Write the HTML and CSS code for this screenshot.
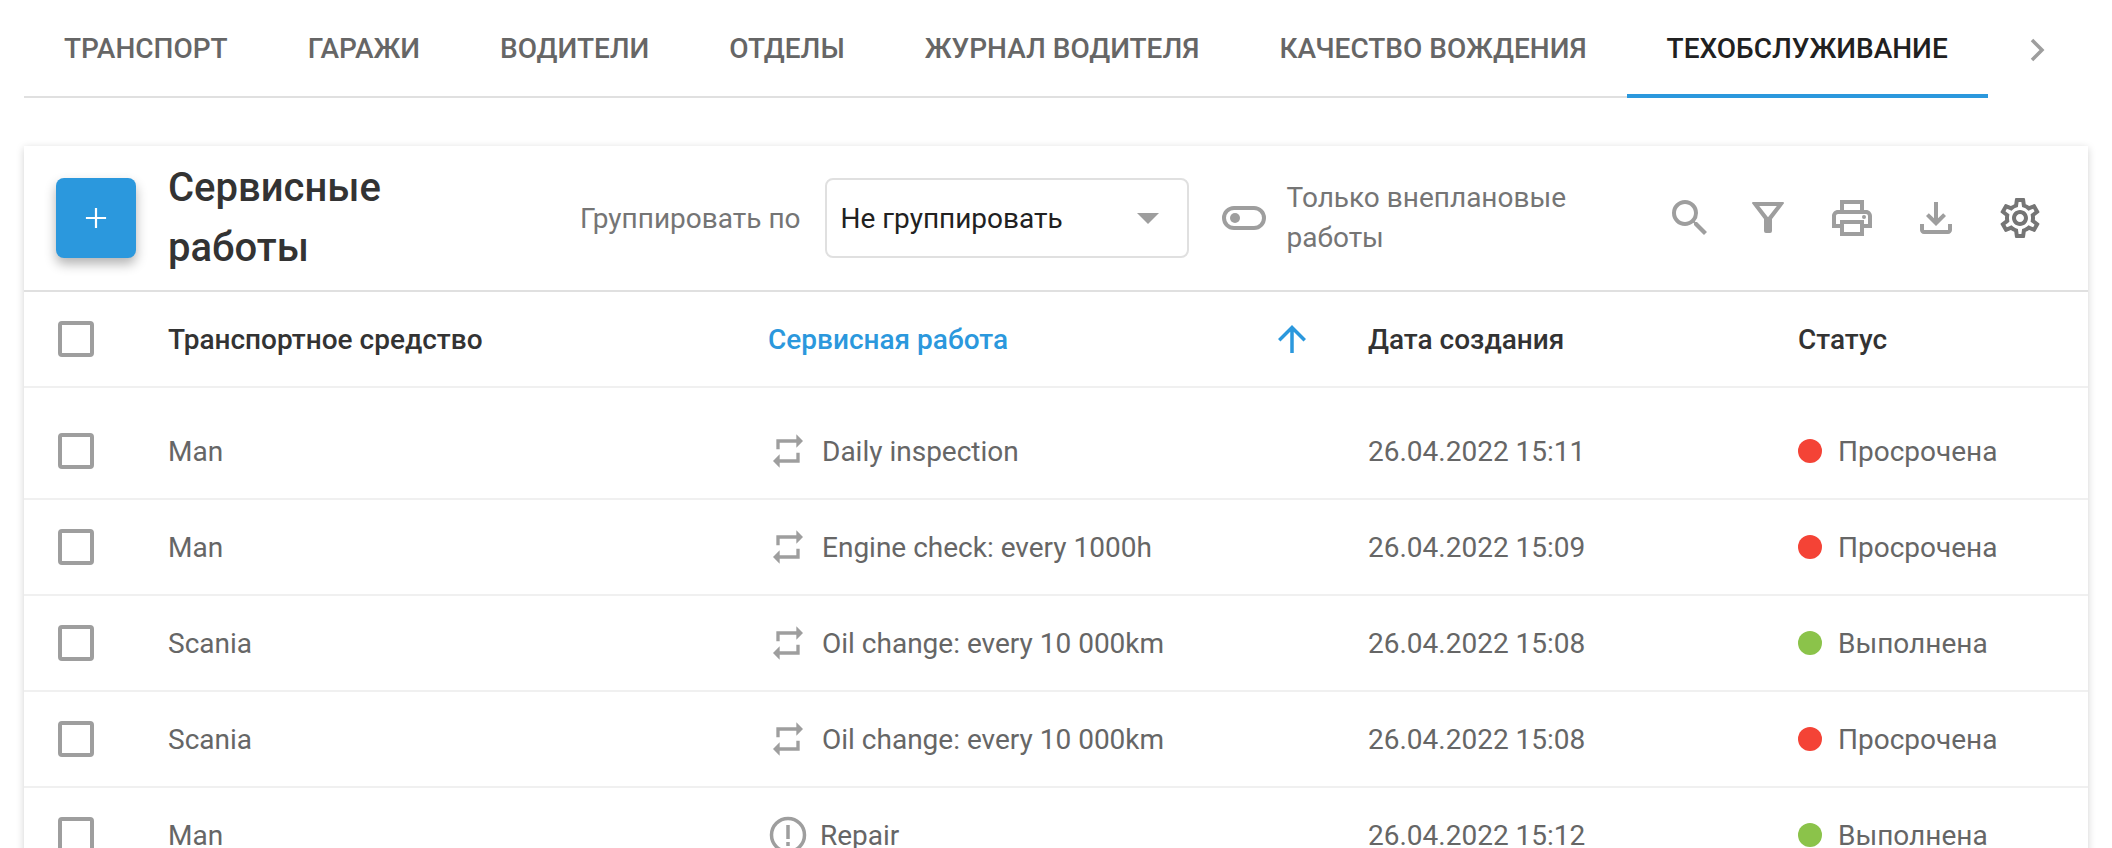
FILE: index.html
```html
<!DOCTYPE html>
<html lang="ru">
<head>
  <meta charset="UTF-8" />
  <title>Сервисные работы</title>
  <link rel="stylesheet" href="styles.css">
</head>
<body>
  <nav class="tabs-bar">
    <div class="tabs">
      <a class="tab">Транспорт</a>
      <a class="tab">Гаражи</a>
      <a class="tab">Водители</a>
      <a class="tab">Отделы</a>
      <a class="tab">Журнал водителя</a>
      <a class="tab">Качество вождения</a>
      <a class="tab tab-active">Техобслуживание</a>
    </div>
    <svg class="tabs-next" viewBox="0 0 16 24"><path d="M3 2l10 10L3 22" /></svg>
  </nav>

  <section class="card">
    <div class="toolbar">
      <button class="fab">
        <svg viewBox="0 0 24 24"><path d="M12 1v22M1 12h22" /></svg>
      </button>
      <h1 class="title">Сервисные работы</h1>
      <span class="group-label">Группировать по</span>
      <div class="select">
        <span>Не группировать</span>
        <i class="select-arrow"></i>
      </div>
      <div class="toggle"><i class="toggle-knob"></i></div>
      <span class="toggle-label">Только внеплановые работы</span>
      <div class="actions">
        <span class="action action-search">
          <svg class="icon" viewBox="0 0 24 24"><path d="M15.5 14h-.79l-.28-.27A6.471 6.471 0 0 0 16 9.5 6.5 6.5 0 1 0 9.5 16c1.61 0 3.09-.59 4.23-1.57l.27.28v.79l5 4.99L20.49 19l-4.99-5zm-6 0C7.01 14 5 11.99 5 9.5S7.01 5 9.5 5 14 7.01 14 9.5 11.99 14 9.5 14z"/></svg>
        </span>
        <span class="action">
          <svg class="icon" viewBox="0 0 24 24"><path fill-rule="evenodd" d="M4.5 4h15a.5.5 0 0 1 .4.8L14 12.5v6a1 1 0 0 1-1 1h-2a1 1 0 0 1-1-1v-6L4.1 4.8A.5.5 0 0 1 4.5 4zM7.6 6L12 11.6 16.4 6z"/></svg>
        </span>
        <span class="action">
          <svg class="icon" viewBox="0 0 24 24"><path d="M19 8h-1V3H6v5H5c-1.66 0-3 1.34-3 3v6h4v4h12v-4h4v-6c0-1.66-1.34-3-3-3zM8 5h8v3H8V5zm8 12v2H8v-4h8v2zm2-2v-2H6v2H4v-4c0-.55.45-1 1-1h14c.55 0 1 .45 1 1v4h-2z"/><circle cx="18" cy="11.5" r="1"/></svg>
        </span>
        <span class="action">
          <svg class="icon" viewBox="0 0 24 24"><path d="M18 15v3H6v-3H4v3c0 1.1.9 2 2 2h12c1.1 0 2-.9 2-2v-3h-2zm-1-4l-1.41-1.41L13 12.17V4h-2v8.17L8.41 9.59 7 11l5 5 5-5z"/></svg>
        </span>
        <span class="action">
          <svg class="icon icon-dark" viewBox="0 0 24 24"><path d="M19.43 12.98c.04-.32.07-.64.07-.98 0-.34-.03-.66-.07-.98l2.11-1.65c.19-.15.24-.42.12-.64l-2-3.46c-.09-.16-.26-.25-.44-.25-.06 0-.12.01-.17.03l-2.49 1c-.52-.4-1.08-.73-1.69-.98l-.38-2.65C14.46 2.18 14.25 2 14 2h-4c-.25 0-.46.18-.49.42l-.38 2.65c-.61.25-1.17.59-1.69.98l-2.49-1c-.06-.02-.12-.03-.18-.03-.17 0-.34.09-.43.25l-2 3.46c-.13.22-.07.49.12.64l2.11 1.65c-.04.32-.07.65-.07.98 0 .33.03.66.07.98l-2.11 1.65c-.19.15-.24.42-.12.64l2 3.46c.09.16.26.25.44.25.06 0 .12-.01.17-.03l2.49-1c.52.4 1.08.73 1.69.98l.38 2.65c.03.24.24.42.49.42h4c.25 0 .46-.18.49-.42l.38-2.65c.61-.25 1.17-.59 1.69-.98l2.49 1c.06.02.12.03.18.03.17 0 .34-.09.43-.25l2-3.46c.12-.22.07-.49-.12-.64l-2.11-1.65zm-1.98-1.71c.04.31.05.52.05.73 0 .21-.02.43-.05.73l-.14 1.13.89.7 1.08.84-.7 1.21-1.27-.51-1.04-.42-.9.68c-.43.32-.84.56-1.25.73l-1.06.43-.16 1.13-.2 1.35h-1.4l-.19-1.35-.16-1.13-1.06-.43c-.43-.18-.83-.41-1.23-.71l-.91-.7-1.06.43-1.27.51-.7-1.21 1.08-.84.89-.7-.14-1.13c-.03-.31-.05-.54-.05-.74s.02-.43.05-.73l.14-1.13-.89-.7-1.08-.84.7-1.21 1.27.51 1.04.42.9-.68c.43-.32.84-.56 1.25-.73l1.06-.43.16-1.13.2-1.35h1.39l.19 1.35.16 1.13 1.06.43c.43.18.83.41 1.23.71l.91.7 1.06-.43 1.27-.51.7 1.21-1.07.85-.89.7.14 1.13zM12 8c-2.21 0-4 1.79-4 4s1.79 4 4 4 4-1.79 4-4-1.79-4-4-4zm0 6c-1.1 0-2-.9-2-2s.9-2 2-2 2 .9 2 2-.9 2-2 2z"/></svg>
        </span>
      </div>
    </div>

    <div class="row row-head">
      <div><i class="checkbox"></i></div>
      <div>Транспортное средство</div>
      <div class="sorted">
        <span>Сервисная работа</span>
        <svg class="sort-arrow" viewBox="0 0 24 24"><path d="M4 12l1.41 1.41L11 7.83V20h2V7.83l5.58 5.59L20 12l-8-8-8 8z"/></svg>
      </div>
      <div>Дата создания</div>
      <div>Статус</div>
    </div>

    <div class="table-body">
      <div class="row">
        <div><i class="checkbox"></i></div>
        <div>Man</div>
        <div class="service">
          <svg class="service-icon" viewBox="0 0 24 24"><path d="M7 7h10v3l4-4-4-4v3H5v6h2V7zm10 10H7v-3l-4 4 4 4v-3h12v-6h-2v4z"/></svg>
          Daily inspection
        </div>
        <div>26.04.2022 15:11</div>
        <div class="status"><i class="dot dot-red"></i>Просрочена</div>
      </div>
      <div class="row">
        <div><i class="checkbox"></i></div>
        <div>Man</div>
        <div class="service">
          <svg class="service-icon" viewBox="0 0 24 24"><path d="M7 7h10v3l4-4-4-4v3H5v6h2V7zm10 10H7v-3l-4 4 4 4v-3h12v-6h-2v4z"/></svg>
          Engine check: every 1000h
        </div>
        <div>26.04.2022 15:09</div>
        <div class="status"><i class="dot dot-red"></i>Просрочена</div>
      </div>
      <div class="row">
        <div><i class="checkbox"></i></div>
        <div>Scania</div>
        <div class="service">
          <svg class="service-icon" viewBox="0 0 24 24"><path d="M7 7h10v3l4-4-4-4v3H5v6h2V7zm10 10H7v-3l-4 4 4 4v-3h12v-6h-2v4z"/></svg>
          Oil change: every 10 000km
        </div>
        <div>26.04.2022 15:08</div>
        <div class="status"><i class="dot dot-green"></i>Выполнена</div>
      </div>
      <div class="row">
        <div><i class="checkbox"></i></div>
        <div>Scania</div>
        <div class="service">
          <svg class="service-icon" viewBox="0 0 24 24"><path d="M7 7h10v3l4-4-4-4v3H5v6h2V7zm10 10H7v-3l-4 4 4 4v-3h12v-6h-2v4z"/></svg>
          Oil change: every 10 000km
        </div>
        <div>26.04.2022 15:08</div>
        <div class="status"><i class="dot dot-red"></i>Просрочена</div>
      </div>
      <div class="row">
        <div><i class="checkbox"></i></div>
        <div>Man</div>
        <div class="service service-repair">
          <svg class="service-icon" viewBox="0 0 40 40"><circle cx="20" cy="20" r="16.5"/><path d="M20 10v14M20 27v4"/></svg>
          Repair
        </div>
        <div>26.04.2022 15:12</div>
        <div class="status"><i class="dot dot-green"></i>Выполнена</div>
      </div>
    </div>
  </section>
</body>
</html>
```

FILE: styles.css
```css
/* --- base --- */
html, body {
  height: 100%;
  overflow: hidden;
}
body {
  margin: 0;
  background: #fff;
  color: #666;
  font-family: Roboto, "Liberation Sans", sans-serif;
  font-size: 28px;
}

/* --- tabs --- */
.tabs-bar {
  display: flex;
  align-items: flex-start;
  padding-left: 24px;
}
.tabs {
  display: flex;
  width: 1964px;
  height: 98px;
  box-sizing: border-box;
  border-bottom: 2px solid #e0e0e0;
}
.tab {
  height: 98px;
  box-sizing: border-box;
  padding: 0 40px;
  line-height: 98px;
  font-weight: 500;
  text-transform: uppercase;
  white-space: nowrap;
}
.tab-active {
  color: #212121;
  border-bottom: 4px solid #2b98dd;
}
.tabs-next {
  width: 16px;
  height: 24px;
  margin: 38px 0 0 41px;
  fill: none;
  stroke: #9e9e9e;
  stroke-width: 3.5;
}

/* --- card + toolbar --- */
.card {
  margin: 48px 24px 0;
  box-shadow: 0 2px 8px rgba(0,0,0,0.18);
}
.toolbar {
  display: flex;
  align-items: center;
  height: 146px;
  box-sizing: border-box;
  padding-left: 32px;
  border-bottom: 2px solid #e0e0e0;
}
.fab {
  flex: none;
  width: 80px;
  height: 80px;
  padding: 0;
  border: none;
  border-radius: 8px;
  background: #2b98dd;
  box-shadow: 0 6px 12px rgba(0,0,0,0.3);
}
.fab svg {
  display: block;
  width: 22px;
  height: 22px;
  margin: auto;
  fill: none;
  stroke: #fff;
  stroke-width: 2.4;
}
.title {
  flex: none;
  width: 212px;
  margin: 0 0 0 32px;
  padding-right: 200px;
  color: #333;
  font-size: 40px;
  font-weight: 500;
  line-height: 60px;
}
.group-label {
  flex: none;
  color: #757575;
}
.select {
  display: flex;
  align-items: center;
  justify-content: space-between;
  flex: none;
  width: 364px;
  height: 80px;
  box-sizing: border-box;
  margin-left: 24px;
  padding: 0 28px 0 14px;
  border: 2px solid #e0e0e0;
  border-radius: 8px;
  color: #212121;
}
.select-arrow {
  border-left: 11px solid transparent;
  border-right: 11px solid transparent;
  border-top: 11px solid #9e9e9e;
}
.toggle {
  display: flex;
  align-items: center;
  flex: none;
  width: 44px;
  height: 24px;
  box-sizing: border-box;
  margin-left: 33px;
  padding-left: 4px;
  border: 4px solid #9e9e9e;
  border-radius: 12px;
}
.toggle-knob {
  width: 10px;
  height: 10px;
  border-radius: 50%;
  background: #9e9e9e;
}
.toggle-label {
  flex: none;
  width: 326px;
  margin-left: 21px;
  color: #757575;
  line-height: 40px;
}
.actions {
  display: flex;
  margin-left: 41px;
}
.action {
  width: 84px;
  text-align: center;
}
.action-search {
  width: 72px;
}
.icon {
  display: inline-block;
  vertical-align: top;
  width: 48px;
  height: 48px;
  fill: #9e9e9e;
}
.icon-dark {
  fill: #757575;
}

/* --- table --- */
.row {
  display: grid;
  grid-template-columns: 144px 600px 600px 430px 290px;
  align-items: center;
  height: 96px;
  box-sizing: border-box;
  border-bottom: 2px solid #f0f0f0;
}
.row > div:first-child {
  padding-left: 34px;
}
.row-head {
  color: #333;
  font-weight: 500;
}
.table-body {
  padding-top: 16px;
}
.checkbox {
  display: block;
  width: 36px;
  height: 36px;
  box-sizing: border-box;
  border: 4px solid #9e9e9e;
  border-radius: 4px;
}
.sorted {
  display: flex;
  align-items: center;
  justify-content: space-between;
  padding-right: 55px;
  color: #2b98dd;
}
.sort-arrow {
  width: 42px;
  height: 42px;
  fill: #2b98dd;
}
.service {
  display: flex;
  align-items: center;
  gap: 14px;
}
.service-icon {
  flex: none;
  width: 40px;
  height: 40px;
  fill: #9e9e9e;
}
.service-repair {
  gap: 12px;
}
.service-repair .service-icon {
  fill: none;
  stroke: #9e9e9e;
  stroke-width: 3.5;
}
.status {
  display: flex;
  align-items: center;
  gap: 16px;
}
.dot {
  width: 24px;
  height: 24px;
  border-radius: 50%;
}
.dot-red {
  background: #f44336;
}
.dot-green {
  background: #8bc34a;
}
```
